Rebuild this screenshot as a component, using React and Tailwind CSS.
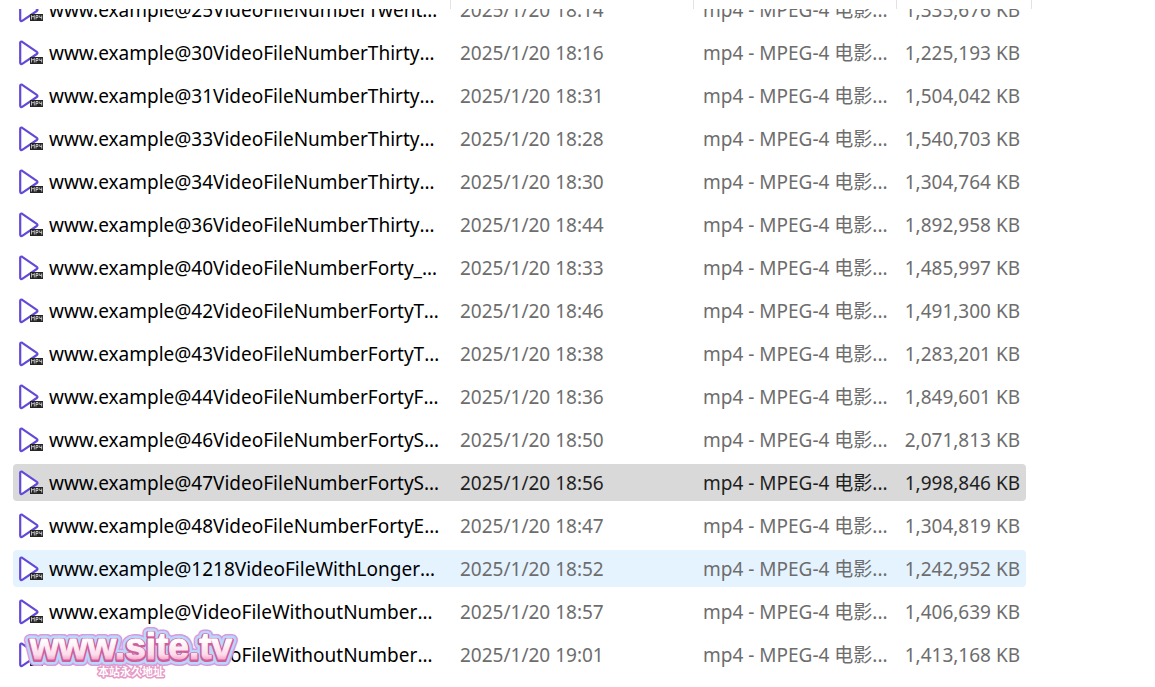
const files = [
  { name: "www.example@25VideoFileNumberTwentyFive_final.mp4", date: "2025/1/20 18:14", size: "1,335,676 KB" },
  { name: "www.example@30VideoFileNumberThirty_final.mp4", date: "2025/1/20 18:16", size: "1,225,193 KB" },
  { name: "www.example@31VideoFileNumberThirtyOne_final.mp4", date: "2025/1/20 18:31", size: "1,504,042 KB" },
  { name: "www.example@33VideoFileNumberThirtyThree_final.mp4", date: "2025/1/20 18:28", size: "1,540,703 KB" },
  { name: "www.example@34VideoFileNumberThirtyFour_final.mp4", date: "2025/1/20 18:30", size: "1,304,764 KB" },
  { name: "www.example@36VideoFileNumberThirtySix_final.mp4", date: "2025/1/20 18:44", size: "1,892,958 KB" },
  { name: "www.example@40VideoFileNumberForty_final.mp4", date: "2025/1/20 18:33", size: "1,485,997 KB" },
  { name: "www.example@42VideoFileNumberFortyTwo_final.mp4", date: "2025/1/20 18:46", size: "1,491,300 KB" },
  { name: "www.example@43VideoFileNumberFortyThree_final.mp4", date: "2025/1/20 18:38", size: "1,283,201 KB" },
  { name: "www.example@44VideoFileNumberFortyFour_final.mp4", date: "2025/1/20 18:36", size: "1,849,601 KB" },
  { name: "www.example@46VideoFileNumberFortySix_final.mp4", date: "2025/1/20 18:50", size: "2,071,813 KB" },
  { name: "www.example@47VideoFileNumberFortySeven_final.mp4", date: "2025/1/20 18:56", size: "1,998,846 KB", state: "selected" },
  { name: "www.example@48VideoFileNumberFortyEight_final.mp4", date: "2025/1/20 18:47", size: "1,304,819 KB" },
  { name: "www.example@1218VideoFileWithLongerNumber_final.mp4", date: "2025/1/20 18:52", size: "1,242,952 KB", state: "hover" },
  { name: "www.example@VideoFileWithoutNumberOne_final.mp4", date: "2025/1/20 18:57", size: "1,406,639 KB" },
  { name: "www.example@VideoFileWithoutNumberTwo_final.mp4", date: "2025/1/20 19:01", size: "1,413,168 KB" },
];

const rowStyles = {
  selected: "bg-[#d9d9d9] text-[#1f1f1f]",
  hover: "bg-[#e5f3ff] text-[#6d6d6d]",
  normal: "text-[#6d6d6d]",
};

// Play triangle with the small MP4 badge
const Mp4Icon = () => (
  <svg className="shrink-0" width="25" height="26" viewBox="0 0 25 26" aria-hidden="true">
    <path
      d="M1.2 2.8v20c0 1.2 1 1.6 2 1L17.8 14c.9-.6.9-1.6 0-2.2L3.2 1.8c-1-.6-2-.2-2 1z"
      fill="#fff"
      stroke="#6449d8"
      strokeWidth="2.2"
      strokeLinejoin="round"
    />
    <rect x="11" y="17" width="13" height="7" fill="#252525" />
    <path
      d="M12.5 22.5v-4l1.4 1.7 1.4-1.7v4M17 22.5v-4h2v2h-2M20.7 18.5v2h2M22.7 18.5v4"
      fill="none"
      stroke="#dcdcdc"
      strokeWidth="0.8"
    />
  </svg>
);

const FileRow = ({ file }) => (
  <tr className={`h-[37px] ${rowStyles[file.state ?? "normal"]}`}>
    <td className="rounded-l-sm p-0">
      <div className="flex items-center gap-[5px] pl-1.5 pr-2.5">
        <Mp4Icon />
        <span className="truncate text-black">{file.name}</span>
      </div>
    </td>
    <td className="p-0 pl-2.5">{file.date}</td>
    <td className="p-0 pl-2.5">mp4 - MPEG-4 电影...</td>
    <td className="rounded-r-sm p-0 pr-1.5 text-right">{file.size}</td>
  </tr>
);

// Sticker over the bottom left corner
const Watermark = () => (
  <svg
    className="absolute bottom-0 left-5"
    width="222"
    height="64"
    viewBox="0 0 222 64"
    fontFamily="'Liberation Sans', 'Noto Sans CJK SC', sans-serif"
    fontWeight="700"
    textAnchor="middle"
    strokeLinejoin="round"
  >
    <defs>
      <linearGradient id="candy" x1="0" y1="0" x2="0" y2="1">
        <stop offset="0.35" stopColor="#fff" />
        <stop offset="0.7" stopColor="#fbdcea" />
        <stop offset="0.95" stopColor="#ef6ca6" />
      </linearGradient>
    </defs>
    <g fontSize="37">
      <text x="111" y="37" fill="#d79ade" stroke="#d79ade" strokeWidth="12">www.site.tv</text>
      <text x="111" y="37" fill="#b9d6fb" stroke="#b9d6fb" strokeWidth="9">www.site.tv</text>
      <text x="111" y="37" fill="#cf5e9c" stroke="#cf5e9c" strokeWidth="4">www.site.tv</text>
      <text x="111" y="36" fill="url(#candy)" stroke="url(#candy)" strokeWidth="1">www.site.tv</text>
    </g>
    <g fontSize="11">
      <text x="111" y="53" fill="#e79ac6" stroke="#e79ac6" strokeWidth="3">本站永久地址</text>
      <text x="111" y="53" fill="#fff">本站永久地址</text>
    </g>
  </svg>
);

const App = () => {
  return (
    <main className="relative min-h-screen overflow-hidden bg-white pl-[13px] font-['Noto_Sans','Noto_Sans_CJK_SC',sans-serif] text-[19px] leading-6">
      {/* Lower edge of the column headings */}
      <div className="flex h-[9px]">
        <div className="w-[438px] border-r border-[#e2e2e2]" />
        <div className="w-[243px] border-r border-[#e2e2e2]" />
        <div className="w-[203px] border-r border-[#e2e2e2]" />
        <div className="w-[135px] border-r border-[#e2e2e2]" />
      </div>

      {/* File list, scrolled part way through a row */}
      <div className="overflow-hidden">
        <table className="-mt-6 w-[1013px] table-fixed border-separate border-spacing-x-0 border-spacing-y-1.5 whitespace-nowrap">
          <colgroup>
            <col className="w-[437px]" />
            <col className="w-[243px]" />
            <col className="w-[203px]" />
            <col className="w-[130px]" />
          </colgroup>
          <tbody>
            {files.map((file) => (
              <FileRow key={file.name} file={file} />
            ))}
          </tbody>
        </table>
      </div>

      <Watermark />
    </main>
  );
};

export default App;
